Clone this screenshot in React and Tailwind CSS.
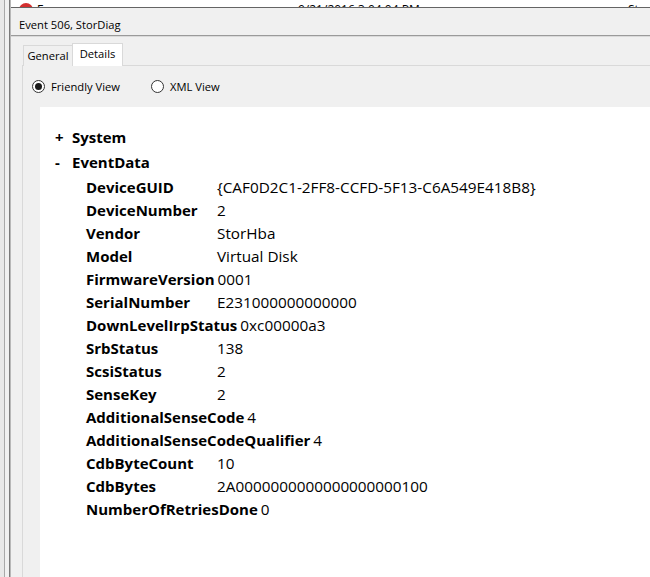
export default function App() {
  const rows = [
    ["DeviceGUID", "{CAF0D2C1-2FF8-CCFD-5F13-C6A549E418B8}"],
    ["DeviceNumber", "2"],
    ["Vendor", "StorHba"],
    ["Model", "Virtual Disk"],
    ["FirmwareVersion", "0001"],
    ["SerialNumber", "E231000000000000"],
    ["DownLevelIrpStatus", "0xc00000a3"],
    ["SrbStatus", "138"],
    ["ScsiStatus", "2"],
    ["SenseKey", "2"],
    ["AdditionalSenseCode", "4"],
    ["AdditionalSenseCodeQualifier", "4"],
    ["CdbByteCount", "10"],
    ["CdbBytes", "2A0000000000000000000100"],
    ["NumberOfRetriesDone", "0"],
  ];
  return (
    <div className="w-[650px] h-[577px] overflow-hidden bg-[#f0f0f0] flex font-['Open_Sans',sans-serif] text-black">
      {/* left window strip */}
      <div className="w-[11px] h-full flex shrink-0">
        <div className="w-[4px] bg-[#e8e8e8]" />
        <div className="w-px bg-[#a8a8a8]" />
        <div className="w-[4px] bg-[#f0f0f0]" />
        <div className="w-px bg-[#7a7a7a]" />
        <div className="w-px bg-[#b8b8b8]" />
      </div>
      <div className="flex-1 flex flex-col min-w-0">
        {/* background list row, mostly covered */}
        <div className="h-[7px] bg-white overflow-hidden flex text-[12px] leading-[16px] whitespace-nowrap shrink-0">
          <div className="w-[287px] flex shrink-0 pt-[2px]">
            <div className="ml-[8px] mt-[1px] w-[14px] h-[14px] rounded-full bg-[#d32f2f] shrink-0" />
            <span className="ml-[4px]">Error</span>
          </div>
          <div className="w-[330px] shrink-0 pt-[2px]">9/21/2016 3:04:04 PM</div>
          <div className="pt-[2px]">StorDiag</div>
        </div>
        {/* dialog */}
        <div className="flex-1 flex flex-col border-t border-[#646464] bg-[#f0f0f0] min-h-0">
          <div className="h-[27px] pl-[8px] pt-[9px] text-[11.2px] leading-[16px] shrink-0">Event 506, StorDiag</div>
          <div className="h-px bg-[#9a9a9a] shrink-0" />
          <div className="h-px bg-[#dadada] shrink-0" />
          {/* tabs */}
          <div className="mt-[6px] ml-[12px] flex items-end h-[23px] text-[11.2px] shrink-0 relative z-10">
            <div className="h-[21px] w-[50px] border border-b-0 border-[#d9d9d9] bg-[#f0f0f0] flex items-center justify-center leading-[16px]">General</div>
            <div className="h-[23px] w-[51px] border border-b-0 border-[#d9d9d9] bg-white flex items-start justify-center pt-[2px] leading-[16px] -ml-px">Details</div>
          </div>
          {/* tab panel */}
          <div className="flex-1 ml-[11px] -mt-px border-l border-t border-[#d9d9d9] bg-[#f0f0f0] flex flex-col min-h-0">
            <div className="h-[41px] pl-[9px] flex items-center text-[11.2px] leading-[16px] shrink-0">
              <div className="w-[119px] flex items-center gap-[6px]">
                <div className="w-[13px] h-[13px] rounded-full border border-[#333] bg-white flex items-center justify-center">
                  <div className="w-[7px] h-[7px] rounded-full bg-[#1a1a1a]" />
                </div>
                <span>Friendly View</span>
              </div>
              <div className="flex items-center gap-[6px]">
                <div className="w-[13px] h-[13px] rounded-full border border-[#333] bg-white" />
                <span>XML View</span>
              </div>
            </div>
            <div className="flex-1 ml-[17px] bg-white pt-[19px] text-[15px] whitespace-nowrap">
              <div className="h-[25px] leading-[23px] flex pl-[15px] font-bold">
                <span className="w-[17px]">+</span>
                <span>System</span>
              </div>
              <div className="h-[25px] leading-[23px] flex pl-[15px] font-bold">
                <span className="w-[17px]">-</span>
                <span>EventData</span>
              </div>
              {rows.map(([k, v]) => (
                <div key={k} className="h-[23px] leading-[23px] flex pl-[46px]">
                  <span className="min-w-[131px] pr-[3px] font-bold">{k}</span>
                  <span className="text-[15.3px]">{v}</span>
                </div>
              ))}
            </div>
          </div>
        </div>
      </div>
    </div>
  );
}
